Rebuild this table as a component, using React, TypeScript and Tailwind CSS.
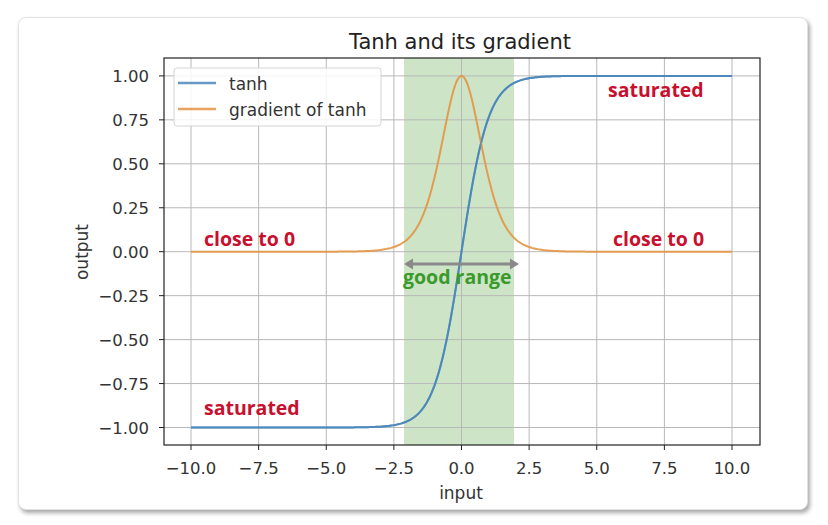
import React from 'react';

// plot geometry (page coordinates inside the card's svg)
const X0 = 163; // left spine
const X1 = 759; // right spine
const Y0 = 57; // top spine
const Y1 = 444; // bottom spine
const xs = (x: number) => 460.5 + x * 27.05;
const ys = (y: number) => 250.7 - y * 175.8;

const curve = (f: (x: number) => number) => {
  const pts: string[] = [];
  for (let i = 0; i <= 400; i++) {
    const x = -10 + (i / 400) * 20;
    pts.push(`${xs(x).toFixed(2)},${ys(f(x)).toFixed(2)}`);
  }
  return pts.join(' ');
};

const xTicks = [-10, -7.5, -5, -2.5, 0, 2.5, 5, 7.5, 10];
const yTicks = [1, 0.75, 0.5, 0.25, 0, -0.25, -0.5, -0.75, -1];
const fmt = (v: number, d: number) => (v < 0 ? '\u2212' : '') + Math.abs(v).toFixed(d);

const axisText = "font-['DejaVu_Sans',sans-serif] fill-[#333]";
const noteText = "font-['Open_Sans','Noto_Sans',sans-serif] font-bold text-[19.5px]";

const TanhChart = () => (
  <svg width="790" height="493" viewBox="18 17 790 493" className="block">
    {/* good range band */}
    <rect x={403} y={Y0} width={110} height={Y1 - Y0} fill="#cde5c6" />

    {/* grid */}
    {xTicks.map((t) => (
      <line key={'gx' + t} x1={xs(t)} x2={xs(t)} y1={Y0} y2={Y1} stroke="#b8b8b8" strokeWidth={1} />
    ))}
    {yTicks.map((t) => (
      <line key={'gy' + t} x1={X0} x2={X1} y1={ys(t)} y2={ys(t)} stroke="#b8b8b8" strokeWidth={1} />
    ))}

    {/* curves */}
    <polyline points={curve(Math.tanh)} fill="none" stroke="#4d88bb" strokeWidth={2} />
    <polyline
      points={curve((x) => 1 - Math.tanh(x) ** 2)}
      fill="none"
      stroke="#e49443"
      strokeWidth={2}
      opacity={0.9}
    />
    <polyline points={curve(Math.tanh)} fill="none" stroke="#4d88bb" strokeWidth={2} opacity={0.6} />

    {/* spines */}
    <rect x={X0} y={Y0} width={X1 - X0} height={Y1 - Y0} fill="none" stroke="#222" strokeWidth={1.2} />

    {/* ticks + labels */}
    {xTicks.map((t) => (
      <g key={'tx' + t}>
        <line x1={xs(t)} x2={xs(t)} y1={Y1} y2={Y1 + 5} stroke="#222" strokeWidth={1} />
        <text x={xs(t)} y={473} textAnchor="middle" className={axisText + ' text-[16.5px]'}>
          {fmt(t, 1)}
        </text>
      </g>
    ))}
    {yTicks.map((t) => (
      <g key={'ty' + t}>
        <line x1={X0 - 5} x2={X0} y1={ys(t)} y2={ys(t)} stroke="#222" strokeWidth={1} />
        <text x={148} y={ys(t) + 6} textAnchor="end" className={axisText + ' text-[16.5px]'}>
          {fmt(t, 2)}
        </text>
      </g>
    ))}

    {/* title and axis labels */}
    <text x={459} y={48} textAnchor="middle" className="font-['DejaVu_Sans',sans-serif] fill-[#222] text-[21px]">
      Tanh and its gradient
    </text>
    <text x={460} y={498} textAnchor="middle" className={axisText + ' text-[17px]'}>
      input
    </text>
    <text x={0} y={0} transform="translate(87 251) rotate(-90)" textAnchor="middle" className={axisText + ' text-[17px]'}>
      output
    </text>

    {/* legend */}
    <rect x={173} y={67} width={207} height={58} rx={3} fill="#ffffff" fillOpacity={0.85} stroke="#d4d4d4" />
    <line x1={177} x2={215} y1={82} y2={82} stroke="#4d88bb" strokeWidth={2.5} opacity={0.85} />
    <line x1={177} x2={215} y1={108} y2={108} stroke="#e49443" strokeWidth={2.5} opacity={0.85} />
    <text x={228} y={89} className={axisText + ' text-[17px]'}>
      tanh
    </text>
    <text x={228} y={115} className={axisText + ' text-[17px]'}>
      gradient of tanh
    </text>

    {/* annotations */}
    <text x={203} y={245} className={noteText + ' fill-[#c8102e]'}>
      close to 0
    </text>
    <text x={612} y={245} className={noteText + ' fill-[#c8102e]'}>
      close to 0
    </text>
    <text x={607} y={96} className={noteText + ' fill-[#c8102e]'}>
      saturated
    </text>
    <text x={203} y={414} className={noteText + ' fill-[#c8102e]'}>
      saturated
    </text>

    {/* good range arrow */}
    <line x1={410} x2={511} y1={263} y2={263} stroke="#8a8a8a" strokeWidth={3} />
    <polygon points="403,263 412,257.5 412,268.5" fill="#8a8a8a" />
    <polygon points="518,263 509,257.5 509,268.5" fill="#8a8a8a" />
    <text x={402} y={283} className={noteText + ' fill-[#3a9a2c]'}>
      good range
    </text>
  </svg>
);

export default function App() {
  return (
    <div className="w-[828px] h-[525px] bg-white pl-[18px] pt-[17px]">
      <div className="w-[790px] h-[493px] rounded-lg border border-[#e2e2e2] bg-white shadow-[2px_3px_4px_rgba(0,0,0,0.35)] overflow-hidden">
        <TanhChart />
      </div>
    </div>
  );
}
